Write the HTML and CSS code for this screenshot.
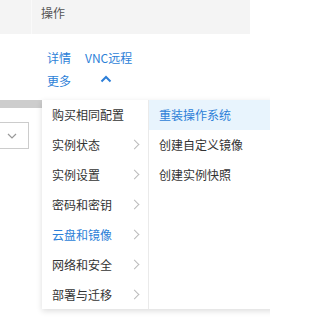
FILE: index.html
```html
<!DOCTYPE html>
<html lang="zh">
<head>
<meta charset="utf-8">
<link rel="stylesheet" href="styles.css">
</head>
<body>
<div class="page">
  <div class="thead">
    <div class="th th-first"></div>
    <div class="th th-op">操作</div>
  </div>
  <div class="ops">
    <div class="ops-row">
      <a class="link">详情</a>
      <a class="link">VNC远程</a>
    </div>
    <div class="ops-row">
      <a class="link">更多</a>
      <svg class="caret" width="12" height="8" viewBox="0 0 12 8"><path d="M1.5 6.5 L6 2 L10.5 6.5" fill="none" stroke="#2d7fd8" stroke-width="2"/></svg>
    </div>
  </div>
  <div class="graybar"></div>
  <div class="select">
    <svg width="10" height="6" viewBox="0 0 10 6"><path d="M1 1 L5 5 L9 1" fill="none" stroke="#999" stroke-width="1.2"/></svg>
  </div>

  <div class="menu">
    <ul class="menu-main">
      <li class="item">购买相同配置</li>
      <li class="item has-sub">实例状态<span class="chev"></span></li>
      <li class="item has-sub">实例设置<span class="chev"></span></li>
      <li class="item has-sub">密码和密钥<span class="chev"></span></li>
      <li class="item has-sub active">云盘和镜像<span class="chev"></span></li>
      <li class="item has-sub">网络和安全<span class="chev"></span></li>
      <li class="item has-sub">部署与迁移<span class="chev"></span></li>
    </ul>
    <ul class="menu-sub">
      <li class="item hover">重装操作系统</li>
      <li class="item">创建自定义镜像</li>
      <li class="item">创建实例快照</li>
    </ul>
  </div>
</div>
</body>
</html>
```
FILE: styles.css
```css
* { box-sizing: border-box; }
html, body { margin: 0; padding: 0; background: #fff; }
body {
  font-family: "Noto Sans CJK SC", "Noto Sans", sans-serif;
  font-size: 12px;
  color: #333;
  width: 270px;
  height: 331px;
  overflow: hidden;
}
.page { position: relative; width: 270px; height: 331px; }
.thead {
  display: flex;
  width: 250px;
  height: 34px;
  background: #f4f4f4;
}
.th-first { width: 32px; border-right: 1px solid #fafafa; }
.th-op { padding-left: 9px; line-height: 26px; color: #555; }
.ops { padding: 12px 0 0 47px; }
.ops-row { display: flex; align-items: center; height: 23px; }
.link { color: #2d7fd8; margin-right: 14px; line-height: 23px; }
.caret { margin-left: 15px; margin-top: -3px; }
.graybar {
  margin-top: 8px;
  width: 60px;
  height: 8px;
  background: #cdcdcd;
}
.select {
  margin-top: 14px;
  width: 29px;
  height: 27px;
  border: 1px solid #ccc;
  border-left: none;
  display: flex;
  align-items: center;
  padding-left: 7px;
}
.menu {
  position: absolute;
  left: 42px;
  top: 100px;
  width: 240px;
  height: 209px;
  display: flex;
  background: #fff;
  box-shadow: 0 2px 6px rgba(0,0,0,0.14);
}
.menu ul { list-style: none; margin: 0; padding: 0; }
.menu-main { width: 107px; border-right: 1px solid #eaeaea; }
.menu-sub { flex: 1; }
.item {
  height: 30px;
  line-height: 30px;
  padding-left: 10px;
  position: relative;
  white-space: nowrap;
  color: #333;
}
.item.active { color: #2d7fd8; }
.item.hover { background: #e8f4fd; color: #2d7fd8; }
.chev {
  position: absolute;
  right: 10px;
  top: 11px;
  width: 7px;
  height: 7px;
  border-top: 1.2px solid #bbb;
  border-right: 1.2px solid #bbb;
  transform: rotate(45deg);
}
```
